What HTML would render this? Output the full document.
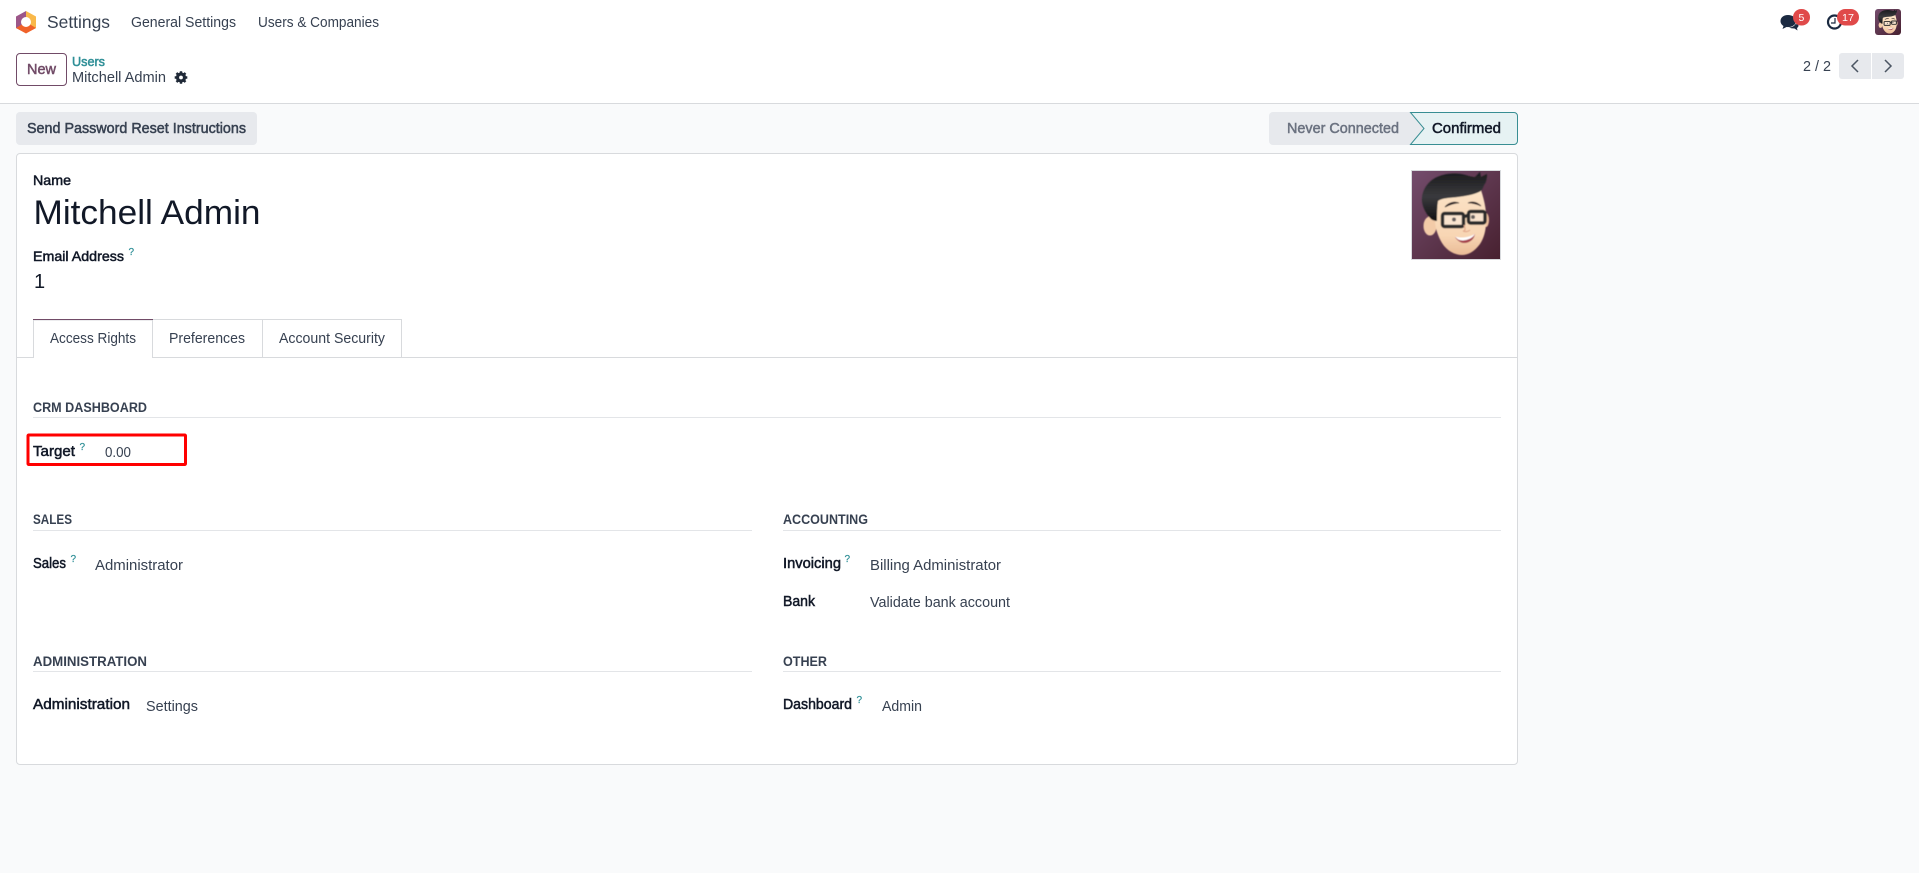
<!DOCTYPE html>
<html lang="en">
<head>
<meta charset="utf-8">
<title>Mitchell Admin - Settings</title>
<style>
html,body{margin:0;padding:0;width:1919px;height:873px;overflow:hidden;background:#f9fafb}
svg{display:block;position:absolute;left:0;top:0}
text{font-family:"Liberation Sans",sans-serif;font-size:14.5px;fill:#374151}
.b{fill:#111827;stroke:#111827;stroke-width:.5px}
.m{stroke-width:.5px}
.h{font-weight:bold;fill:#374151;font-size:13.5px}
.q{font-size:10px;fill:#2f8f97;stroke:#2f8f97;stroke-width:.2px}
</style>
</head>
<body>
<svg width="1919" height="873" viewBox="0 0 1919 873" xmlns="http://www.w3.org/2000/svg">
<defs>
<linearGradient id="g" x1="0" y1="0" x2="1" y2="1"><stop offset="0" stop-color="#744d6d"/><stop offset="1" stop-color="#47202f"/></linearGradient>
<linearGradient id="sk" x1="0" y1="0" x2="0" y2="1"><stop offset="0" stop-color="#fbe3c6"/><stop offset=".7" stop-color="#f8d6b4"/><stop offset="1" stop-color="#eabb96"/></linearGradient>
<linearGradient id="hr" x1="0" y1="0" x2="0" y2="1"><stop offset="0" stop-color="#1a1a1d"/><stop offset=".5" stop-color="#3a3a3d"/><stop offset="1" stop-color="#111113"/></linearGradient>
<filter id="sf" x="-5%" y="-5%" width="110%" height="110%"><feGaussianBlur stdDeviation=".45"/></filter>
<symbol id="ava" viewBox="0 0 90 90">
<rect width="90" height="90" fill="url(#g)"/>
<g filter="url(#sf)">
<ellipse cx="19" cy="56" rx="6.500" ry="9.500" fill="#f3cba8"/>
<ellipse cx="75" cy="50" rx="3" ry="7" fill="#eec09c"/>
<path d="M24 28 L70 20 C74 32 76 44 75 52 C75 60 73 68 69 74 C63 82 57 85 51 85 C44 85 36 81 31 73 C27 66 24 58 24 50Z" fill="url(#sk)"/>
<path d="M20 49 C14 43 10 34 11 27 C12 19 17 12 24 8 C33 3 44 3 50 4 C56 5 60 7 64 7 L69 2 L70 7 L76 4 C76 9 75 13 73 15 C72 18 71 21 68 22 C62 25 54 26 47 27 C38 28 31 28 27 31 C26 37 26 44 26 51 C24 51 21 50 20 49Z" fill="url(#hr)"/>
<path d="M34 37 C37 33 43 31 48 33 C43 33 38 35 34 37Z M57 33 C61 31 66 32 70 36 C66 34 61 33 57 33Z" fill="#2a2225" stroke="#2a2225" stroke-width=".8"/>
<rect x="31.500" y="43.500" width="21" height="13" rx="2" fill="#f9e4cf" stroke="#2a2a2c" stroke-width="3.400"/>
<rect x="57.500" y="41.500" width="16.500" height="11.500" rx="2" fill="#f9e4cf" stroke="#2a2a2c" stroke-width="3.400"/>
<path d="M52 47 L58 45" stroke="#2a2a2c" stroke-width="3.500"/>
<circle cx="43" cy="49.500" r="2" fill="#66605e"/><circle cx="62" cy="47" r="2" fill="#66605e"/>
<path d="M53 55 C55 60 54 61 52 61 C54 62 57 62 59 60" fill="none" stroke="#e3a98c" stroke-width="1.200"/>
<path d="M44 67 C50 69 58 68 64 64 C63 70 58 73 53 73 C49 73 46 70 44 67Z" fill="#a5404c"/>
<path d="M44 66.500 C50 68.500 58 67.500 64 64 C62 68 57 70 52 70.500 C48 70.500 46 69 44 66.500Z" fill="#fff"/>
</g>
</symbol>
</defs>

<!-- header -->
<rect x="0" y="0" width="1919" height="103" fill="#fff"/>
<rect x="0" y="103" width="1919" height="1" fill="#d8dadd"/>

<!-- logo -->
<path d="M26 11 L16 16.500 V28 L21 30.500 L26 22Z" fill="#9c5789"/>
<path d="M26 11 L36 16.500 V28 L31 30.500 L26 22Z" fill="#f9b84a"/>
<path d="M16 28 L26 22 L36 28 L26 33.500Z" fill="#f0622a"/>
<circle cx="26" cy="22" r="5" fill="#fff"/>

<text x="47" y="28" style="font-size:17.500px" textLength="63" lengthAdjust="spacingAndGlyphs">Settings</text>
<text x="131" y="27" textLength="105" lengthAdjust="spacingAndGlyphs">General Settings</text>
<text x="258" y="27" textLength="121" lengthAdjust="spacingAndGlyphs">Users &amp; Companies</text>

<!-- systray -->
<path d="M1788 15 C1783 15 1780.500 18 1780.500 21 C1780.500 23.500 1782 25 1783.500 26 L1782.500 29 L1786.500 27 C1791 27.500 1796 25.500 1796 21 C1796 17.500 1792.500 15 1788 15Z" fill="#1b2a41"/>
<path d="M1795.500 24 C1797 24.500 1798.500 24 1798.500 25.500 C1798.500 27 1797.500 27.500 1797 28 L1797.500 30.500 L1794.500 28.500 C1792 28.500 1790 28 1789 27.500 C1792 27.500 1794.500 26 1795.500 24Z" fill="#1b2a41"/>
<rect x="1793" y="9" width="17" height="16.500" rx="8.200" fill="#e04a4a"/>
<text x="1798.500" y="21" style="font-size:10.500px;fill:#fff">5</text>
<circle cx="1834.500" cy="22" r="6.500" fill="#fff" stroke="#1b2a41" stroke-width="2.200"/>
<path d="M1835 18 V23 H1831" fill="none" stroke="#1b2a41" stroke-width="1.200"/>
<rect x="1837" y="9" width="22" height="16.500" rx="8.200" fill="#e04a4a"/>
<text x="1842" y="21" style="font-size:10.500px;fill:#fff" textLength="12" lengthAdjust="spacingAndGlyphs">17</text>
<clipPath id="cav"><rect x="1875" y="9" width="26" height="26" rx="3"/></clipPath>
<g clip-path="url(#cav)"><use href="#ava" x="1875" y="9" width="26" height="26"/></g>

<!-- control panel -->
<rect x="16.500" y="53.500" width="50" height="32" rx="3.500" fill="#fff" stroke="#714b67"/>
<text x="27" y="74" class="m" style="fill:#714b67;stroke:#714b67" textLength="29" lengthAdjust="spacingAndGlyphs">New</text>
<text x="72" y="66" class="m" style="font-size:13px;fill:#2f8f97;stroke:#2f8f97" textLength="33" lengthAdjust="spacingAndGlyphs">Users</text>
<text x="72" y="82" textLength="94" lengthAdjust="spacingAndGlyphs">Mitchell Admin</text>
<g transform="translate(181,77.500)">
<circle r="3.500" fill="none" stroke="#1f2937" stroke-width="3.200"/>
<path stroke="#1f2937" stroke-width="2.400" d="M0-6.300V-4M0 6.300V4M-6.300 0H-4M6.300 0H4M-4.500-4.500L-2.800-2.800M4.500 4.500L2.800 2.800M-4.500 4.500L-2.800 2.800M4.500-4.500L2.800-2.800"/>
</g>

<text x="1803" y="71" textLength="28" lengthAdjust="spacingAndGlyphs">2 / 2</text>
<path d="M1842 53 H1871 V79 H1842 A3 3 0 0 1 1839 76 V56 A3 3 0 0 1 1842 53Z" fill="#e7e9ed"/>
<path d="M1872 53 H1901 A3 3 0 0 1 1904 56 V76 A3 3 0 0 1 1901 79 H1872Z" fill="#e7e9ed"/>
<path d="M1858 60 L1852 66 L1858 72" fill="none" stroke="#4b5563" stroke-width="1.500"/>
<path d="M1885 60 L1891 66 L1885 72" fill="none" stroke="#4b5563" stroke-width="1.500"/>

<!-- action row -->
<rect x="16" y="112" width="241" height="33" rx="4" fill="#e7e9ed"/>
<text x="27" y="133" class="m" style="stroke:#374151" textLength="219" lengthAdjust="spacingAndGlyphs">Send Password Reset Instructions</text>

<path d="M1273 112 H1412 L1426 128.500 L1412 145 H1273 A4 4 0 0 1 1269 141 V116 A4 4 0 0 1 1273 112Z" fill="#e7e9ed"/>
<path d="M1410.500 112.500 H1514 A3.500 3.500 0 0 1 1517.500 116 V141 A3.500 3.500 0 0 1 1514 144.500 H1410.500 L1424 128.500Z" fill="#e6f2f3" stroke="#388e93"/>
<text x="1287" y="133" class="m" style="fill:#6b7280;stroke:#6b7280" textLength="112" lengthAdjust="spacingAndGlyphs">Never Connected</text>
<text x="1432" y="133" class="m" style="fill:#111827;stroke:#111827" textLength="69" lengthAdjust="spacingAndGlyphs">Confirmed</text>

<!-- card -->
<rect x="16.500" y="153.500" width="1501" height="611" rx="3.500" fill="#fff" stroke="#d8dadd"/>

<text x="33" y="185" class="b" style="font-size:14px" textLength="38" lengthAdjust="spacingAndGlyphs">Name</text>
<text x="33.500" y="224" style="font-size:34px;fill:#111827" textLength="227" lengthAdjust="spacingAndGlyphs">Mitchell Admin</text>
<text x="33" y="261" class="b" style="font-size:14px" textLength="91" lengthAdjust="spacingAndGlyphs">Email Address</text>
<text x="128.500" y="255" class="q">?</text>
<text x="34" y="288" style="font-size:20px;fill:#111827">1</text>

<use href="#ava" x="1411" y="170" width="90" height="90"/>
<rect x="1411.500" y="170.500" width="89" height="89" fill="none" stroke="#d8dadd"/>

<!-- tabs -->
<rect x="16" y="357" width="1502" height="1" fill="#d8dadd"/>
<path d="M152.500 358 V319.500 H262.500 V357 M262.500 319.500 H401.500 V357" fill="none" stroke="#d8dadd"/>
<path d="M33.500 358 V320 H152.500 V358" fill="#fff" stroke="#d8dadd"/>
<rect x="34" y="357" width="118" height="2" fill="#fff"/>
<rect x="33" y="319" width="120" height="1" fill="#714b67"/>
<text x="50" y="343" textLength="86" lengthAdjust="spacingAndGlyphs">Access Rights</text>
<text x="169" y="343" textLength="76" lengthAdjust="spacingAndGlyphs">Preferences</text>
<text x="279" y="343" textLength="106" lengthAdjust="spacingAndGlyphs">Account Security</text>

<!-- CRM dashboard -->
<text x="33" y="412" class="h" textLength="114" lengthAdjust="spacingAndGlyphs">CRM DASHBOARD</text>
<rect x="33" y="417" width="1468" height="1" fill="#e3e5e8"/>
<rect x="28" y="435" width="157.500" height="29.500" rx=".8" fill="none" stroke="#f00" stroke-width="3"/>
<text x="33" y="456" class="b" textLength="42" lengthAdjust="spacingAndGlyphs">Target</text>
<text x="79.500" y="450" class="q">?</text>
<text x="105" y="457" textLength="26" lengthAdjust="spacingAndGlyphs">0.00</text>

<!-- Sales -->
<text x="33" y="524" class="h" textLength="39" lengthAdjust="spacingAndGlyphs">SALES</text>
<rect x="33" y="530" width="719" height="1" fill="#e3e5e8"/>
<text x="33" y="568" class="b" textLength="33" lengthAdjust="spacingAndGlyphs">Sales</text>
<text x="70.500" y="562" class="q">?</text>
<text x="95" y="570" textLength="88" lengthAdjust="spacingAndGlyphs">Administrator</text>

<!-- Accounting -->
<text x="783" y="524" class="h" textLength="85" lengthAdjust="spacingAndGlyphs">ACCOUNTING</text>
<rect x="783" y="530" width="718" height="1" fill="#e3e5e8"/>
<text x="783" y="568" class="b" textLength="58" lengthAdjust="spacingAndGlyphs">Invoicing</text>
<text x="844.500" y="562" class="q">?</text>
<text x="870" y="570" textLength="131" lengthAdjust="spacingAndGlyphs">Billing Administrator</text>
<text x="783" y="606" class="b" textLength="32" lengthAdjust="spacingAndGlyphs">Bank</text>
<text x="870" y="607" textLength="140" lengthAdjust="spacingAndGlyphs">Validate bank account</text>

<!-- Administration -->
<text x="33" y="666" class="h" textLength="114" lengthAdjust="spacingAndGlyphs">ADMINISTRATION</text>
<rect x="33" y="671" width="719" height="1" fill="#e3e5e8"/>
<text x="33" y="709" class="b" textLength="97" lengthAdjust="spacingAndGlyphs">Administration</text>
<text x="146" y="711" textLength="52" lengthAdjust="spacingAndGlyphs">Settings</text>

<!-- Other -->
<text x="783" y="666" class="h" textLength="44" lengthAdjust="spacingAndGlyphs">OTHER</text>
<rect x="783" y="671" width="718" height="1" fill="#e3e5e8"/>
<text x="783" y="709" class="b" textLength="69" lengthAdjust="spacingAndGlyphs">Dashboard</text>
<text x="856.500" y="703" class="q">?</text>
<text x="882" y="711" textLength="40" lengthAdjust="spacingAndGlyphs">Admin</text>
</svg>
</body>
</html>
